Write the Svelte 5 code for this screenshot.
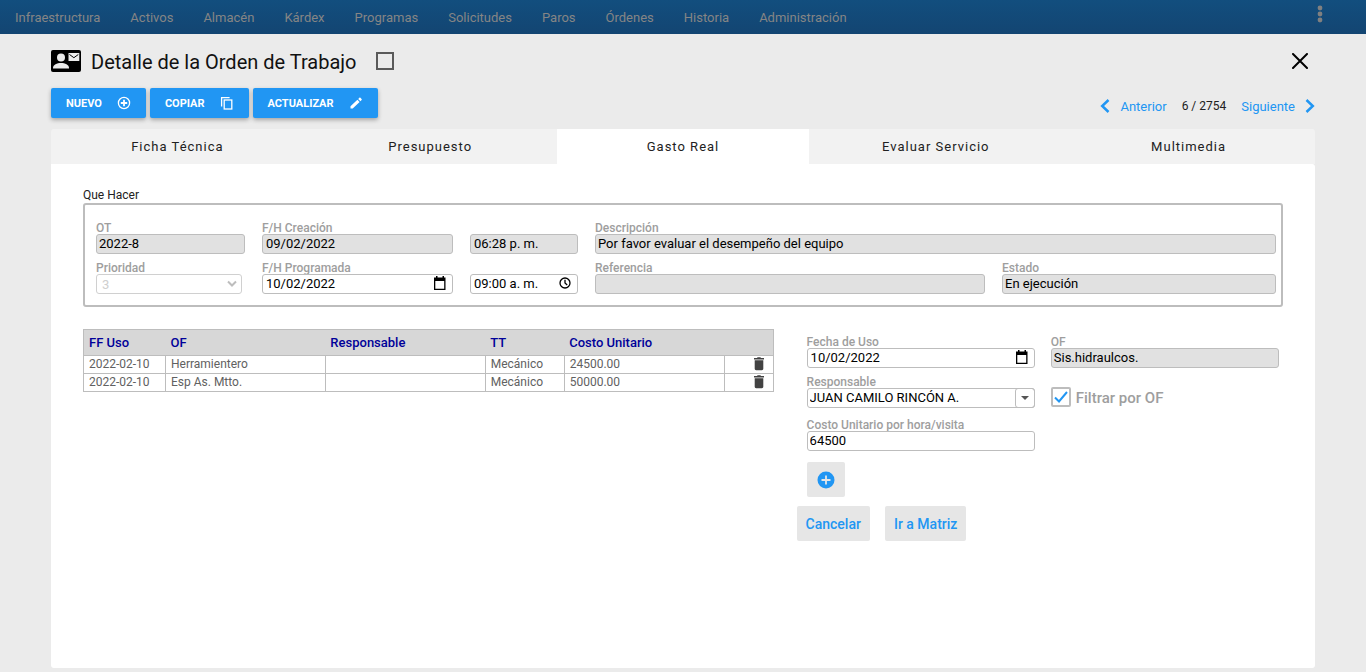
<script lang="ts">
  const menu = [
    "Infraestructura",
    "Activos",
    "Almacén",
    "Kárdex",
    "Programas",
    "Solicitudes",
    "Paros",
    "Órdenes",
    "Historia",
    "Administración",
  ];

  const tabs = ["Ficha Técnica", "Presupuesto", "Gasto Real", "Evaluar Servicio", "Multimedia"];

  let activeTab = $state("Gasto Real");
  let selected = $state(false);
  let filterByOf = $state(true);

  let dateCreated = $state("09/02/2022");
  let timeCreated = $state("06:28 p. m.");
  let dateScheduled = $state("10/02/2022");
  let timeScheduled = $state("09:00 a. m.");
  let dateUsed = $state("10/02/2022");
  let unitCost = $state("64500");

  let rows = $state([
    { id: 1, date: "2022-02-10", of: "Herramientero", responsible: "", tt: "Mecánico", cost: "24500.00" },
    { id: 2, date: "2022-02-10", of: "Esp As. Mtto.", responsible: "", tt: "Mecánico", cost: "50000.00" },
  ]);

  function removeRow(id: number) {
    rows = rows.filter((r) => r.id !== id);
  }
</script>

{#snippet calendarIcon()}
  <svg width="14" height="14" viewBox="0 0 14 14" aria-hidden="true">
    <path d="M3 0h1.500v1.500h5V0H11v1.500h1.500V14H1V1.500h2zM2.300 5v7.700h8.900V5z" fill="#000" fill-rule="evenodd" />
  </svg>
{/snippet}

<div class="page">
  <nav class="topbar">
    <div class="menu">
      {#each menu as item}
        <a href="#{item}">{item}</a>
      {/each}
    </div>
    <button class="more" aria-label="Más opciones">
      <svg width="6" height="18" viewBox="0 0 6 18" fill="#808080">
        <circle cx="3" cy="3" r="2.400" />
        <circle cx="3" cy="9" r="2.400" />
        <circle cx="3" cy="15" r="2.400" />
      </svg>
    </button>
  </nav>

  <main class="content">
    <header class="heading">
      <svg width="30" height="22" viewBox="0 0 30 22" aria-hidden="true">
        <rect width="30" height="22" rx="2" />
        <circle cx="10" cy="7.500" r="4" fill="#ececec" />
        <path d="M2 18c0-3.500 4-5 8-5s8 1.500 8 5v.5H2z" fill="#ececec" />
        <path d="M17.500 3h10.800v8H17.500z" fill="#ececec" />
        <path d="M18.500 4.500l4.400 3.200 4.400-3.200" fill="none" stroke="#000" stroke-width="1" />
      </svg>
      <h1>Detalle de la Orden de Trabajo</h1>
      <input class="select-order" type="checkbox" aria-label="Seleccionar orden" bind:checked={selected} />
      <button class="close" aria-label="Cerrar">
        <svg width="16" height="16" viewBox="0 0 16 16">
          <path d="M1 1l14 14M15 1L1 15" stroke="#000" stroke-width="2" stroke-linecap="round" />
        </svg>
      </button>
    </header>

    <div class="toolbar">
      <div class="tools">
        <button class="tool">
          Nuevo
          <svg width="14" height="14" viewBox="0 0 14 14" fill="none" stroke="#fff" stroke-width="1.300">
            <circle cx="7" cy="7" r="5.600" />
            <path d="M7 3.800v6.400M3.800 7h6.400" stroke-width="1.800" />
          </svg>
        </button>
        <button class="tool">
          Copiar
          <svg width="14" height="14" viewBox="0 0 14 14" fill="none" stroke="#fff" stroke-width="1.300">
            <path d="M1.600 10.500V1.600h8" />
            <rect x="4.200" y="4" width="7.600" height="9" />
          </svg>
        </button>
        <button class="tool">
          Actualizar
          <svg width="14" height="14" viewBox="0 0 14 14" fill="#fff">
            <path d="M1.500 10.200l6.900-6.500 2.200 2.200-6.900 6.600H1.500zM9.200 3l1.200-1.200c.3-.3.700-.3 1 0l1.200 1.200c.3.300.3.700 0 1l-1.200 1.200z" />
          </svg>
        </button>
      </div>
      <div class="pager">
        <button class="page-link">
          <svg width="10" height="14" viewBox="0 0 10 14" fill="none" stroke="#2196f3" stroke-width="2.500">
            <path d="M8.500 1L2.200 7l6.300 6" />
          </svg>
          Anterior
        </button>
        <span class="position">6 / 2754</span>
        <button class="page-link">
          Siguiente
          <svg width="10" height="14" viewBox="0 0 10 14" fill="none" stroke="#2196f3" stroke-width="2.500">
            <path d="M1.500 1l6.300 6-6.300 6" />
          </svg>
        </button>
      </div>
    </div>

    <div class="tabs" role="tablist">
      {#each tabs as tab}
        <button
          class="tab"
          class:active={activeTab === tab}
          role="tab"
          aria-selected={activeTab === tab}
          onclick={() => (activeTab = tab)}
        >
          {tab}
        </button>
      {/each}
    </div>

    <section class="panel">
      <div class="group-title">Que Hacer</div>
      <div class="group">
        <div class="field">
          <label for="ot">OT</label>
          <input id="ot" value="2022-8" readonly />
        </div>
        <div class="field">
          <label for="created">F/H Creación</label>
          <input id="created" class="picker" bind:value={dateCreated} readonly />
        </div>
        <div class="field">
          <input class="picker" aria-label="Hora de creación" bind:value={timeCreated} readonly />
        </div>
        <div class="field wide">
          <label for="description">Descripción</label>
          <input id="description" value="Por favor evaluar el desempeño del equipo" readonly />
        </div>

        <div class="field priority">
          <label for="priority">Prioridad</label>
          <div class="control">
            <select id="priority" disabled>
              <option>3</option>
            </select>
            <svg class="chevron" width="10" height="8" viewBox="0 0 10 8" aria-hidden="true">
              <path d="M1 1.500l4 4 4-4" fill="none" stroke="#bdbdbd" stroke-width="2" />
            </svg>
          </div>
        </div>
        <div class="field">
          <label for="scheduled">F/H Programada</label>
          <div class="control">
            <input id="scheduled" class="picker" bind:value={dateScheduled} />
            <button class="open" aria-label="Elegir fecha">{@render calendarIcon()}</button>
          </div>
        </div>
        <div class="field">
          <div class="control">
            <input class="picker" aria-label="Hora programada" bind:value={timeScheduled} />
            <button class="open" aria-label="Elegir hora">
              <svg width="14" height="14" viewBox="0 0 14 14" fill="none" stroke="#000" stroke-width="1.300">
                <circle cx="7" cy="7" r="5" />
                <path d="M7 3.800V7l2.200 2" />
              </svg>
            </button>
          </div>
        </div>
        <div class="field">
          <label for="reference">Referencia</label>
          <input id="reference" value="" readonly />
        </div>
        <div class="field">
          <label for="status">Estado</label>
          <input id="status" value="En ejecución" readonly />
        </div>
      </div>

      <div class="columns">
        <table>
          <colgroup>
            <col class="c-date" />
            <col />
            <col />
            <col class="c-type" />
            <col />
            <col class="c-action" />
          </colgroup>
          <thead>
            <tr>
              <th>FF Uso</th>
              <th>OF</th>
              <th>Responsable</th>
              <th>TT</th>
              <th>Costo Unitario</th>
              <th></th>
            </tr>
          </thead>
          <tbody>
            {#each rows as row (row.id)}
              <tr>
                <td>{row.date}</td>
                <td>{row.of}</td>
                <td>{row.responsible}</td>
                <td>{row.tt}</td>
                <td>{row.cost}</td>
                <td>
                  <button class="delete" aria-label="Eliminar" onclick={() => removeRow(row.id)}>
                    <svg width="12" height="14" viewBox="0 0 12 14" fill="#424242">
                      <path d="M1 1h3l.6-.8h2.800L8 1h3v1.400H1zM1.700 3.200h8.600v8.600c0 .9-.6 1.400-1.400 1.400H3.100c-.8 0-1.400-.5-1.400-1.400z" />
                    </svg>
                  </button>
                </td>
              </tr>
            {/each}
          </tbody>
        </table>

        <form class="expense" onsubmit={(e) => e.preventDefault()}>
          <div class="fields">
            <div class="stack">
              <div class="field">
                <label for="used">Fecha de Uso</label>
                <div class="control">
                  <input id="used" class="picker" bind:value={dateUsed} />
                  <button type="button" class="open" aria-label="Elegir fecha">{@render calendarIcon()}</button>
                </div>
              </div>
              <div class="field">
                <label for="responsible">Responsable</label>
                <div class="control">
                  <select id="responsible">
                    <option>JUAN CAMILO RINCÓN A.</option>
                  </select>
                  <span class="drop">
                    <svg width="8" height="4" viewBox="0 0 8 4"><path d="M0 0h8L4 4z" fill="#555" /></svg>
                  </span>
                </div>
              </div>
              <div class="field cost">
                <label for="cost">Costo Unitario por hora/visita</label>
                <input id="cost" bind:value={unitCost} />
              </div>
              <button type="button" class="flat add" aria-label="Agregar">
                <svg width="18" height="18" viewBox="0 0 18 18">
                  <circle cx="9" cy="9" r="8.500" fill="#2196f3" />
                  <path d="M9 4.500v9M4.500 9h9" stroke="#e6e6e6" stroke-width="1.800" />
                </svg>
              </button>
            </div>
            <div class="stack">
              <div class="field">
                <label for="of">OF</label>
                <input id="of" value="Sis.hidraulcos." readonly />
              </div>
              <label class="filter">
                <span class="box">
                  <input type="checkbox" bind:checked={filterByOf} />
                  {#if filterByOf}
                    <svg width="14" height="12" viewBox="0 0 14 12" aria-hidden="true">
                      <path d="M1 6.500l4 4L13 1" fill="none" stroke="#2196f3" stroke-width="2" />
                    </svg>
                  {/if}
                </span>
                <span class="filter-text">Filtrar por OF</span>
              </label>
            </div>
          </div>
          <div class="actions">
            <button type="button" class="flat">Cancelar</button>
            <button type="button" class="flat">Ir a Matriz</button>
          </div>
        </form>
      </div>
    </section>
  </main>
</div>

<style>
  :global(body) {
    background: #ebebeb;
  }

  .page {
    display: flex;
    flex-direction: column;
    min-height: 100vh;
    font-family: Roboto, "Liberation Sans", sans-serif;
    font-size: 13px;
    color: #212121;
  }

  .page *,
  .page {
    box-sizing: border-box;
  }

  button,
  input,
  select {
    margin: 0;
    font: inherit;
    color: inherit;
  }

  button {
    padding: 0;
    border: none;
    background: none;
    cursor: pointer;
  }

  svg {
    display: block;
    flex: none;
  }

  .topbar {
    display: flex;
    justify-content: space-between;
    height: 34px;
    background: linear-gradient(#124e7e, #134572);
  }

  .menu {
    display: flex;
    align-items: center;
  }

  .menu a {
    padding: 0 15px;
    color: #858585;
    font-weight: 400;
    text-decoration: none;
  }

  .more {
    display: flex;
    padding: 5px 43px;
  }

  .content {
    display: flex;
    flex: 1;
    flex-direction: column;
    padding: 0 51px 4px;
  }

  .heading {
    display: flex;
    align-items: center;
    height: 54px;
  }

  h1 {
    margin: 0 20px 0 10px;
    padding-top: 2px;
    color: #111;
    font-size: 20px;
    font-weight: 400;
  }

  .select-order {
    appearance: none;
    width: 18px;
    height: 18px;
    border: 2px solid #5a5a5a;
  }

  .select-order:checked {
    background: #2196f3;
  }

  .close {
    margin-left: auto;
    padding: 7px;
  }

  .toolbar {
    display: flex;
    align-items: center;
    justify-content: space-between;
    height: 30px;
    margin-bottom: 11px;
  }

  .tools {
    display: flex;
    gap: 4px;
  }

  .tool {
    display: flex;
    align-items: center;
    gap: 15px;
    height: 30px;
    padding: 0 15px;
    border-radius: 2px;
    background: #2196f3;
    box-shadow: 0 2px 4px rgba(0, 0, 0, 0.3);
    color: #fff;
    font-size: 11px;
    font-weight: 700;
    text-transform: uppercase;
  }

  .pager {
    display: flex;
    align-items: center;
    gap: 15px;
    padding-top: 6px;
  }

  .page-link {
    display: flex;
    align-items: center;
    gap: 10px;
    color: #2196f3;
  }

  .position {
    font-size: 12px;
  }

  .tabs {
    display: flex;
    overflow: hidden;
    border-radius: 3px 3px 0 0;
    background: #f2f2f2;
  }

  .tab {
    flex: 1;
    height: 35px;
    letter-spacing: 1px;
  }

  .tab.active {
    background: #fff;
  }

  .panel {
    flex: 1;
    padding: 24px 32px;
    border-radius: 0 3px 3px 3px;
    background: #fff;
  }

  .group-title {
    font-size: 12px;
    line-height: 15px;
  }

  .group {
    display: grid;
    grid-template-columns: 149px 191px 108px 390fr 274fr;
    gap: 8px 17px;
    padding: 17px 5px 11px 11px;
    border: 2px solid #bdbdbd;
    border-radius: 3px;
  }

  .field {
    display: flex;
    flex-direction: column;
    justify-content: flex-end;
    min-width: 0;
  }

  .wide {
    grid-column: span 2;
  }

  .priority {
    padding-right: 3px;
  }

  .field label {
    color: #9e9e9e;
    font-size: 12px;
    font-weight: 500;
    line-height: 12px;
  }

  .field input,
  .field select {
    width: 100%;
    height: 20px;
    padding: 0 2px 2px;
    border: 1px solid #bdbdbd;
    border-radius: 3px;
    outline: none;
    background: #fff;
    color: #000;
  }

  .field input[readonly] {
    background: #e1e1e1;
  }

  .field .picker {
    padding: 0 3px 2px;
  }

  .field select {
    appearance: none;
  }

  .field select:disabled {
    padding: 0 5px;
    color: #cfcfcf;
    border-color: #d0d0d0;
    opacity: 1;
  }

  .control {
    display: flex;
    position: relative;
  }

  .chevron {
    position: absolute;
    top: 6px;
    right: 5px;
    pointer-events: none;
  }

  .open {
    position: absolute;
    top: 2px;
    right: 6px;
  }

  .drop {
    display: flex;
    position: absolute;
    top: 0;
    right: 0;
    align-items: center;
    justify-content: center;
    width: 20px;
    height: 20px;
    border: 1px solid #bdbdbd;
    border-radius: 3px;
    pointer-events: none;
  }

  .columns {
    display: grid;
    grid-template-columns: 690fr 486fr;
    gap: 23px;
    align-items: start;
    padding-top: 22px;
  }

  table {
    width: 100%;
    border-collapse: collapse;
    table-layout: fixed;
    border: 1px solid #bdbdbd;
  }

  .c-date {
    width: 82px;
  }

  .c-type {
    width: 79px;
  }

  .c-action {
    width: 49px;
  }

  th {
    height: 26px;
    padding: 0 5px;
    background: #d7d7d7;
    color: #000099;
    font-weight: 500;
    text-align: left;
  }

  td {
    height: 18px;
    padding: 0 5px 1px;
    border: 1px solid #bdbdbd;
    color: #616161;
    font-size: 12px;
    line-height: 15px;
  }

  .delete {
    display: block;
    margin: 0 3px 0 auto;
  }

  .fields {
    display: grid;
    grid-template-columns: 1fr 1fr;
    gap: 16px;
    padding: 7px 4px 0 10px;
  }

  .stack {
    display: flex;
    flex-direction: column;
    gap: 8px;
  }

  .cost {
    padding-top: 3px;
  }

  .filter {
    display: flex;
    align-items: center;
    gap: 5px;
    padding-top: 10px;
    color: #9e9e9e;
    font-size: 15px;
    font-weight: 500;
  }

  .filter-text {
    padding-top: 3px;
  }

  .box {
    position: relative;
    width: 20px;
    height: 20px;
  }

  .box input {
    display: block;
    appearance: none;
    width: 20px;
    height: 20px;
    border: 2px solid #bdbdbd;
    border-radius: 2px;
  }

  .box svg {
    position: absolute;
    top: 4px;
    left: 3px;
    pointer-events: none;
  }

  .flat {
    height: 35px;
    padding: 0 9px;
    border-radius: 2px;
    background: #e6e6e6;
    color: #2196f3;
    font-size: 14px;
    font-weight: 500;
  }

  .add {
    align-self: flex-start;
    margin-top: 3px;
    padding: 0 10px;
  }

  .actions {
    display: flex;
    gap: 15px;
    padding-top: 9px;
  }
</style>
